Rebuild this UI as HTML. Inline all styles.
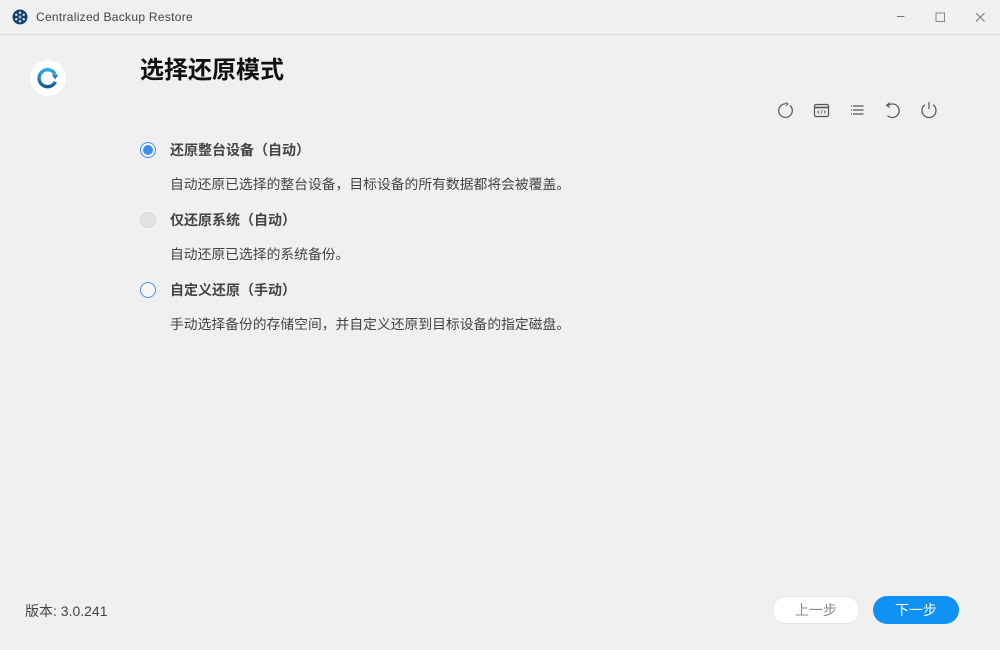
<!DOCTYPE html>
<html lang="zh">
<head>
<meta charset="utf-8">
<style>
html,body{margin:0;padding:0;width:1000px;height:650px;overflow:hidden;background:#f0f0f0;font-family:"Liberation Sans","Noto Sans CJK SC",sans-serif;}
.a{position:absolute;white-space:nowrap;}
svg{position:absolute;overflow:visible;}
.t{font-size:14px;font-weight:700;color:#444;line-height:20px;left:170px;}
.d{font-size:13.8px;color:#444;line-height:18px;left:170px;}
.r{left:140px;width:16px;height:16px;border-radius:50%;box-sizing:border-box;}
.btn{top:596px;width:86px;height:28px;border-radius:14px;text-align:center;line-height:27px;font-size:14px;}
</style>
</head>
<body>
<div class="a" style="left:0;top:34px;width:1000px;height:1px;background:#dcdcdc"></div>

<svg style="left:12px;top:9px" width="16" height="16" viewBox="0 0 16 16">
<circle cx="8" cy="8" r="7.5" fill="#12406f"/>
<circle cx="8" cy="8" r="1.5" fill="#b9a9a0"/>
<g fill="#dbe6f0"><circle cx="8" cy="3.7" r="1.2"/><circle cx="8" cy="12.3" r="1.2"/><circle cx="4.3" cy="5.8" r="1.2"/><circle cx="11.7" cy="5.8" r="1.2"/><circle cx="4.3" cy="10.2" r="1.2"/><circle cx="11.7" cy="10.2" r="1.2"/></g>
</svg>
<div class="a" style="left:36px;top:10px;font-size:12px;line-height:15px;color:#444;letter-spacing:.29px">Centralized Backup Restore</div>

<svg style="left:880px;top:0" width="120" height="40" viewBox="0 0 120 40" fill="none" stroke="#777" stroke-width="1">
<path d="M17 16.500h7.500"/>
<rect x="56" y="13" width="8.500" height="8.500" stroke="#888"/>
<path d="M96 13l8.500 8.500M104.500 13l-8.500 8.500"/>
</svg>

<div class="a" style="left:30px;top:60px;width:36px;height:36px;border-radius:50%;background:#fff"></div>
<svg style="left:30px;top:60px" width="36" height="36" viewBox="0 0 36 36" fill="none">
<defs><linearGradient id="g" x1="0" y1="0" x2="0" y2="1"><stop offset="0" stop-color="#2fa8e4"/><stop offset="1" stop-color="#175f93"/></linearGradient></defs>
<path d="M25 14A8.500 8.500 0 1 0 25.300 21.800" stroke="url(#g)" stroke-width="3.400"/>
<path d="M21.800 14.500h6.600l-3.300 5z" fill="#1f7fb8"/>
</svg>

<div class="a" style="left:140px;top:55px;font-size:24px;line-height:32px;font-weight:700;color:#111;letter-spacing:0">选择还原模式</div>

<svg style="left:770px;top:95px" width="180" height="30" viewBox="0 0 180 30" fill="none" stroke="#555" stroke-width="1.200">
<path d="M20 10.500A6.800 6.800 0 1 1 15.500 8.800"/><path d="M15.500 7.600l2.400 1.500-2 1.800" stroke-width="1"/>
<rect x="44.500" y="9.500" width="14" height="12" rx="1.500"/><path d="M44.500 12.500h14" stroke-width="1.600"/>
<path d="M49 15.500l-1.500 1.500 1.500 1.500M54 15.500l1.500 1.500-1.500 1.500M52.200 15l-1.300 3.800" stroke-width=".8"/>
<path d="M83 11h10.500M83 15h10.500M83 19h10.500M81 11h1M81 15h1M81 19h1"/>
<path d="M118 10.500A6.800 6.800 0 1 1 117.500 20.500"/><path d="M120 7.500l-3.500 2.800 3.300 2.300" stroke-width="1.100"/>
<path d="M155 9.800A7 7 0 1 0 163 9.800"/><path d="M159 7v7"/>
</svg>

<div class="a r" style="top:142px;border:1px solid #3b8ff0;background:#f6f6f6"></div>
<div class="a" style="left:143px;top:145px;width:10px;height:10px;border-radius:50%;background:#3b8ff0"></div>
<div class="a t" style="top:140px">还原整台设备（自动）</div>
<div class="a d" style="top:176px">自动还原已选择的整台设备，目标设备的所有数据都将会被覆盖。</div>

<div class="a r" style="top:212px;border:1px solid #d4d4d4;background:#e2e2e2"></div>
<div class="a t" style="top:210px">仅还原系统（自动）</div>
<div class="a d" style="top:246px">自动还原已选择的系统备份。</div>

<div class="a r" style="top:282px;border:1px solid #4a90e8;background:#f6f6f6"></div>
<div class="a t" style="top:280px">自定义还原（手动）</div>
<div class="a d" style="top:316px">手动选择备份的存储空间，并自定义还原到目标设备的指定磁盘。</div>

<div class="a" style="left:25px;top:602px;font-size:14px;line-height:18px;color:#444">版本: 3.0.241</div>

<div class="a btn" style="left:772px;background:#fff;border:1px solid #e6e6e6;box-sizing:content-box;width:86px;height:26px;top:596px;line-height:26px;color:#8a8a8a">上一步</div>
<div class="a btn" style="left:873px;width:86px;background:#1092f4;color:#fff;line-height:28px">下一步</div>
</body>
</html>
